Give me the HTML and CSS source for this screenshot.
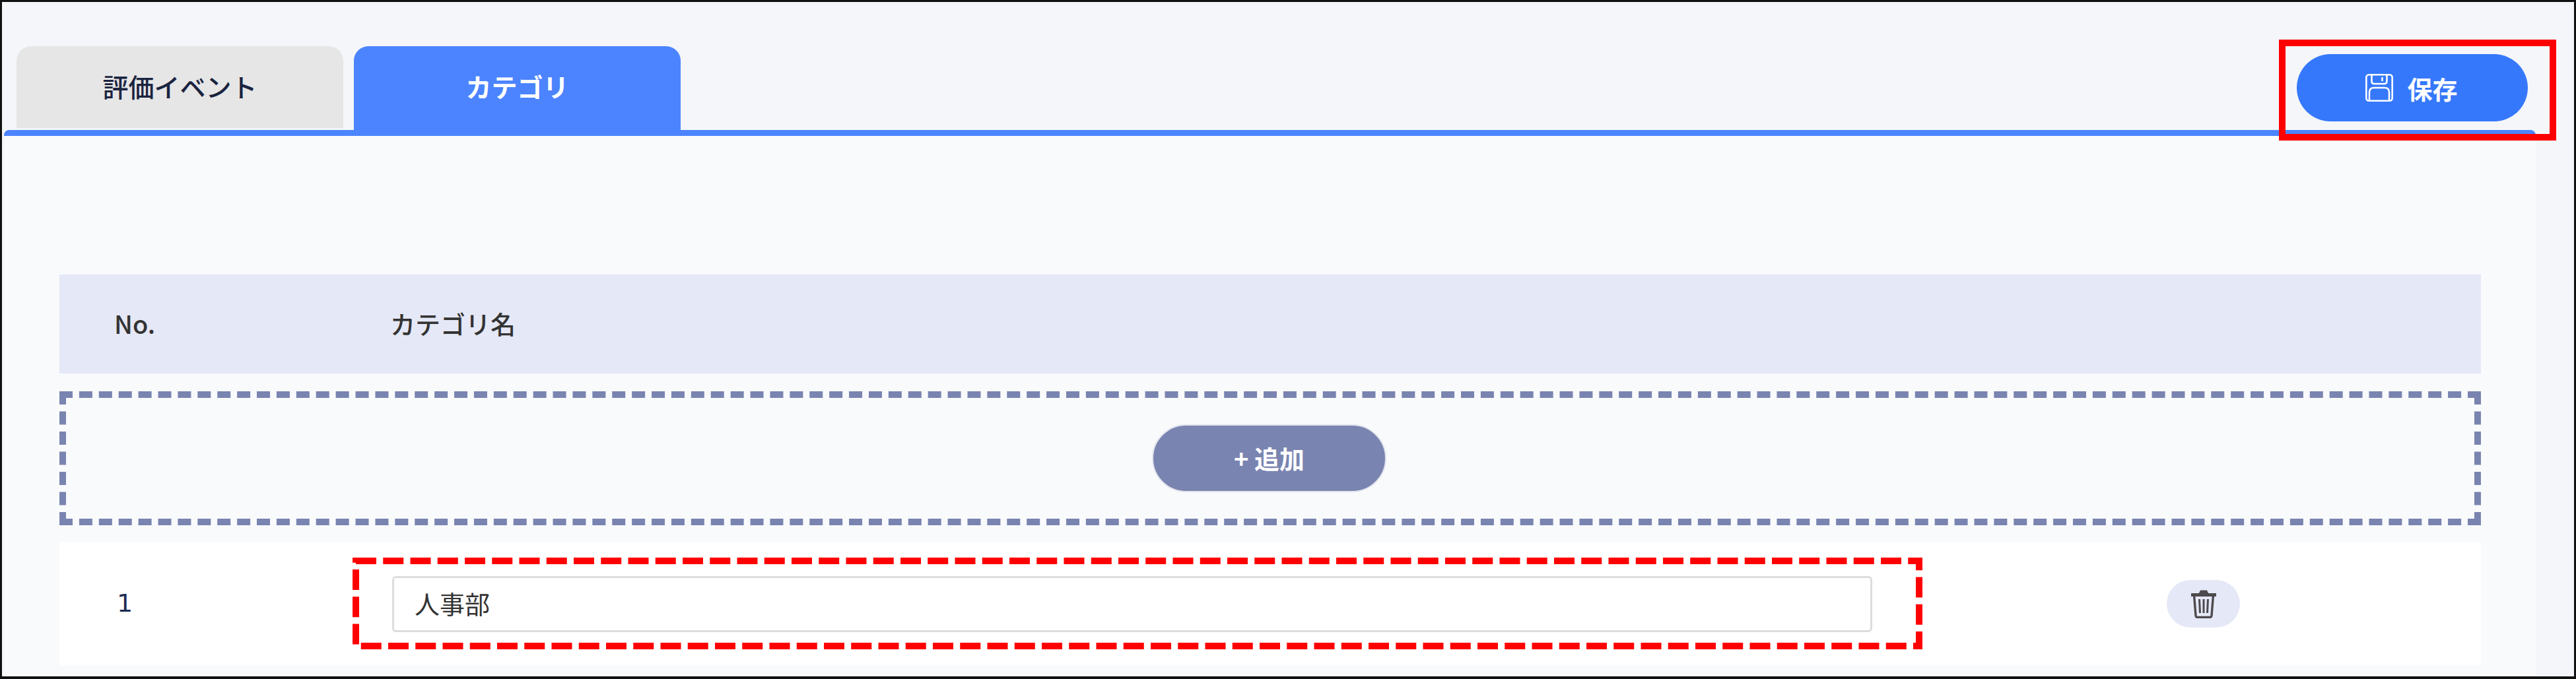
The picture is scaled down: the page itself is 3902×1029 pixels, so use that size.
FILE: index.html
```html
<!DOCTYPE html>
<html lang="ja">
<head>
    <meta charset="UTF-8">
    <title>カテゴリ</title>
    <link rel="stylesheet" href="styles.css">
</head>
<body>
    <div class="frame">
        <div class="topbar">
            <div class="tabs">
                <div class="tab">評価イベント</div>
                <div class="tab tab-active">カテゴリ</div>
            </div>
            <button class="save-btn" type="button">
                <!-- floppy disk -->
                <svg class="save-icon" viewBox="0 0 42 42" fill="none" stroke="#fff" stroke-width="2.6">
                    <rect x="1.3" y="1.3" width="39.4" height="39.4" rx="4"/>
                    <path d="M9.5 2v9q0 4 4 4h15q4 0 4-4V2"/>
                    <path d="M25.5 5v6"/>
                    <path d="M6 40v-12q0-7 7-7h16q7 0 7 7v12"/>
                </svg>
                <span>保存</span>
            </button>
        </div>

        <div class="panel">
            <div class="list-head">
                <div class="col-no">No.</div>
                <div class="col-name">カテゴリ名</div>
            </div>

            <div class="add-box">
                <button class="add-btn" type="button">+ 追加</button>
            </div>

            <div class="row">
                <div class="col-no row-no">1</div>
                <input class="name-input" type="text" value="人事部">
                <button class="delete-btn" type="button">
                    <!-- trash can -->
                    <svg class="trash-icon" viewBox="0 0 38 43" fill="none" stroke="#4d4a4e">
                        <path d="M13 6l2-4h8l2 4" stroke-width="3" fill="#4d4a4e"/>
                        <path d="M0 7.5h38" stroke-width="5"/>
                        <path d="M4.5 8l2.5 31q.3 2.5 3 2.5h18q2.7 0 3-2.5l2.500-31" stroke-width="3.4"/>
                        <path d="M12.5 14l1 21M19 14v21M25.5 14l-1 21" stroke-width="3"/>
                    </svg>
                </button>
            </div>
        </div>

        <!-- red marks laid over the screen -->
        <div class="mark-save"></div>
        <svg class="mark-input" width="2378" height="139" fill="none">
            <rect x="5" y="5" width="2368" height="129" stroke="#ff0000" stroke-width="10" stroke-dasharray="31 10.25"/>
        </svg>
    </div>
</body>
</html>
```

FILE: styles.css
```css
* {
    box-sizing: border-box;
}
body {
    margin: 0;
    font-family: "Noto Sans CJK JP", "Noto Sans", sans-serif;
}
button {
    font-family: inherit;
    cursor: pointer;
}
.frame {
    position: relative;
    height: 1029px;
    border: 3px solid #111;
    border-bottom-width: 4px;
    background-color: #f4f6fa;
    overflow: hidden;
}
.topbar {
    display: flex;
    height: 194px;
    padding-left: 22px;
}
.tabs {
    display: flex;
    align-items: flex-start;
    gap: 16px;
    padding-top: 67px;
}
.tab {
    display: flex;
    align-items: center;
    justify-content: center;
    width: 495px;
    height: 124px;
    padding-bottom: 4px;
    border-radius: 22px 22px 0 0;
    background-color: #e6e6e6;
    color: #1a2340;
    font-size: 39px;
    font-weight: 500;
}
.tab-active {
    height: 127px;
    padding-bottom: 7px;
    background-color: #4c84ff;
    color: #fff;
    font-weight: 700;
}
.save-btn {
    display: flex;
    align-items: center;
    justify-content: center;
    gap: 21px;
    width: 350px;
    height: 102px;
    margin: 79px 70px 0 auto;
    padding-right: 8px;
    border: none;
    border-radius: 51px;
    background-color: #3578fb;
    color: #fff;
    font-size: 38px;
    font-weight: 700;
}
.save-icon {
    width: 42px;
    height: 42px;
}
.panel {
    height: 828px;
    margin: 0 58px 0 3px;
    padding: 210px 83px 0 84px;
    border-top: 9px solid #4c84ff;
    border-radius: 8px 8px 0 0;
    background-color: #f9fafc;
}
.list-head {
    display: flex;
    align-items: center;
    height: 150px;
    padding-bottom: 3px;
    background-color: #e5e8f6;
    color: #333;
    font-size: 38px;
    font-weight: 500;
}
.col-no {
    width: 501px;
    padding-left: 83px;
}
.add-box {
    display: flex;
    align-items: center;
    justify-content: center;
    height: 203px;
    margin-top: 27px;
    border: 10px dashed #7a84b0;
}
.add-btn {
    width: 355px;
    height: 103px;
    margin-right: 3px;
    padding-bottom: 4px;
    border: 2px solid #e3e5ee;
    border-radius: 52px;
    background-color: #7a84b0;
    color: #fff;
    font-size: 38px;
    font-weight: 700;
}
.row {
    display: flex;
    align-items: center;
    height: 186px;
    margin-top: 26px;
    background-color: #fff;
}
.row-no {
    width: 504px;
    padding-left: 87px;
    padding-bottom: 2px;
    color: #1d2b50;
    font-family: "DejaVu Sans", sans-serif;
    font-size: 38px;
}
.name-input {
    width: 2242px;
    height: 85px;
    padding: 0 31px 4px;
    border: 3px solid #ddd;
    border-radius: 6px;
    background-color: #fff;
    color: #333;
    font-family: inherit;
    font-size: 38px;
}
.delete-btn {
    display: flex;
    align-items: center;
    justify-content: center;
    width: 111px;
    height: 72px;
    margin-left: 446px;
    padding: 0;
    border: none;
    border-radius: 36px;
    background-color: #e5e8f6;
}
.trash-icon {
    width: 38px;
    height: 43px;
}
.mark-save {
    position: absolute;
    left: 3449px;
    top: 57px;
    width: 420px;
    height: 153px;
    border: 10px solid #ff0000;
}
.mark-input {
    position: absolute;
    left: 531px;
    top: 842px;
}
```
